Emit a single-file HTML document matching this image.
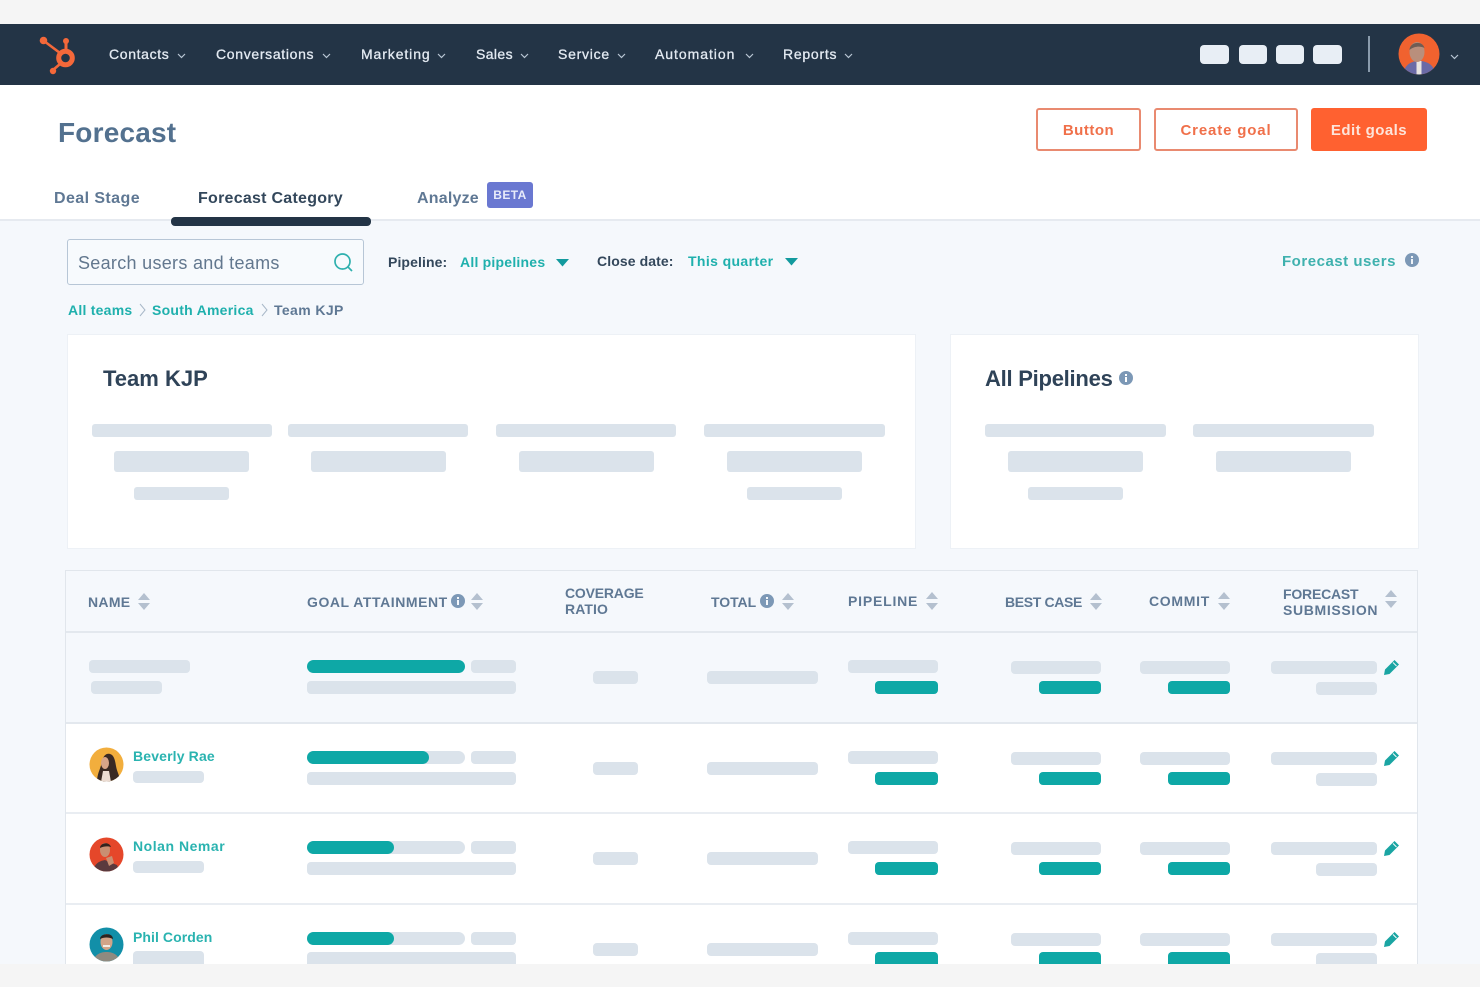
<!DOCTYPE html>
<html lang="en"><head><meta charset="utf-8"><title>Forecast</title>
<style>
html,body{margin:0;padding:0;background:#f5f5f5}
#p{position:relative;width:1480px;height:987px;overflow:hidden;background:#f5f5f5;font-family:"Liberation Sans",sans-serif;filter:blur(.35px)}
#p div,#p svg{position:absolute}
.t{white-space:nowrap;line-height:20px;height:20px}
.nv{top:44px;color:#e3eaf2;font-size:14px;font-weight:400;letter-spacing:.75px;-webkit-text-stroke:.3px #e3eaf2}
.s{background:#dbe3eb;border-radius:3px}
.g{background:#0ea8a6;border-radius:6px}
.h{color:#5f7894;font-size:14px;font-weight:700;letter-spacing:.55px}
.tl{color:#1fb0ad;font-weight:700}
.r{left:0;width:1480px;height:90px;top:0}
.sort{width:12px;height:20px}
</style></head><body>
<div id="p">
<!-- backgrounds -->
<div style="left:0;top:24px;width:1480px;height:61px;background:#233446"></div>
<div style="left:0;top:85px;width:1480px;height:135px;background:#fff"></div>
<div style="left:0;top:219px;width:1480px;height:745px;background:#f5f8fc"></div>
<div style="left:0;top:219px;width:1480px;height:2px;background:#e6eaf0"></div>

<!-- logo -->
<svg style="left:30px;top:28px" width="56" height="52" viewBox="30 28 56 52">
<g stroke="#f4683a" fill="none"><line x1="44" y1="41" x2="60" y2="53" stroke-width="2.6"/><line x1="66" y1="42" x2="66" y2="51" stroke-width="3"/><line x1="53" y1="70" x2="60" y2="64" stroke-width="2.6"/><circle cx="65.500" cy="58" r="6.800" stroke-width="5"/></g>
<g fill="#f4683a"><circle cx="43.500" cy="40.500" r="3.800"/><circle cx="66" cy="41" r="3"/><circle cx="53" cy="71" r="3.200"/></g></svg>

<!-- nav -->
<div class="t nv" style="left:109px;letter-spacing:.65px">Contacts</div>
<div class="t nv" style="left:216px;letter-spacing:.67px">Conversations</div>
<div class="t nv" style="left:361px;letter-spacing:.9px">Marketing</div>
<div class="t nv" style="left:476px;letter-spacing:.4px">Sales</div>
<div class="t nv" style="left:558px">Service</div>
<div class="t nv" style="left:655px;letter-spacing:.95px">Automation</div>
<div class="t nv" style="left:783px">Reports</div>
<svg style="left:0;top:24px" width="1480" height="61" viewBox="0 24 1480 61" fill="none" stroke="#b9c6d4" stroke-width="1.200"><path d="M178 54l3.500 3.500 3.500-3.500M323 54l3.500 3.500 3.500-3.500M438 54l3.500 3.500 3.500-3.500M521 54l3.500 3.500 3.500-3.500M618 54l3.500 3.500 3.500-3.500M746 54l3.500 3.500 3.500-3.500M845 54l3.500 3.500 3.500-3.500M1451 55l3.500 3.500 3.500-3.500"/></svg>
<div style="left:1200px;top:45px;width:29px;height:19px;background:#e8eef5;border-radius:4px"></div>
<div style="left:1239px;top:45px;width:28px;height:19px;background:#e8eef5;border-radius:4px"></div>
<div style="left:1276px;top:45px;width:28px;height:19px;background:#e8eef5;border-radius:4px"></div>
<div style="left:1313px;top:45px;width:29px;height:19px;background:#e8eef5;border-radius:4px"></div>
<div style="left:1368px;top:36px;width:2px;height:36px;background:#8a9bac"></div>
<svg style="left:1398px;top:33px" width="42" height="42" viewBox="0 0 42 42"><defs><clipPath id="c0"><circle cx="21" cy="21" r="20.500"/></clipPath></defs><g clip-path="url(#c0)"><rect width="42" height="42" fill="#f0622f"/><path d="M5 42c1-10 8-14 16-14s16 4 16 14z" fill="#6a6aa6"/><rect x="18.500" y="28" width="5" height="14" fill="#e8e4e0"/><ellipse cx="19" cy="19" rx="7.500" ry="10" fill="#b98f7c"/><path d="M11.500 17c0-8 13-10 15-2-4-2-10-2-15 2z" fill="#6f5d54"/></g></svg>

<!-- header -->
<div class="t" style="left:58px;top:118px;height:30px;line-height:30px;font-size:28px;font-weight:700;color:#53718f;letter-spacing:.2px">Forecast</div>
<div class="t" style="left:1036px;top:108px;width:101px;height:39px;line-height:41px;border:2px solid #e98a70;border-radius:3px;background:#fff;color:#f0704a;font-size:15px;font-weight:700;text-align:center;letter-spacing:.5px">Button</div>
<div class="t" style="left:1154px;top:108px;width:140px;height:39px;line-height:41px;border:2px solid #e98a70;border-radius:3px;background:#fff;color:#f0704a;font-size:15px;font-weight:700;text-align:center;letter-spacing:.85px">Create goal</div>
<div class="t" style="left:1311px;top:108px;width:116px;height:43px;line-height:45px;border-radius:3px;background:#ff6130;color:#fde4da;font-size:15px;font-weight:700;text-align:center;letter-spacing:.45px">Edit goals</div>

<!-- tabs -->
<div class="t" style="left:54px;top:189px;font-size:16px;font-weight:700;color:#5f7894;letter-spacing:.42px">Deal Stage</div>
<div class="t" style="left:198px;top:189px;font-size:16px;font-weight:700;color:#33475b;letter-spacing:.26px">Forecast Category</div>
<div class="t" style="left:417px;top:189px;font-size:16px;font-weight:700;color:#5f7894;letter-spacing:.2px">Analyze</div>
<div class="t" style="left:487px;top:182px;width:46px;height:26px;line-height:26px;background:#6a78d1;border-radius:3px;color:#e8ebfa;font-size:12px;font-weight:700;text-align:center;letter-spacing:.4px">BETA</div>
<div style="left:171px;top:217px;width:200px;height:9px;background:#233446;border-radius:4px"></div>

<!-- filters -->
<div style="left:67px;top:239px;width:295px;height:44px;border:1px solid #b7c6d6;border-radius:3px;background:#f7fafd"></div>
<div class="t" style="left:78px;top:253px;font-size:18px;color:#62778e;letter-spacing:.3px">Search users and teams</div>
<svg style="left:332px;top:251px" width="22" height="22" viewBox="0 0 22 22" fill="none" stroke="#2fb0ae" stroke-width="1.700"><circle cx="10.500" cy="10.500" r="7.500"/><path d="M16 16l4 4"/></svg>
<div class="t" style="left:388px;top:252px;font-size:14px;font-weight:700;color:#33475b;letter-spacing:.1px">Pipeline:</div>
<div class="t tl" style="left:460px;top:252px;font-size:14px;letter-spacing:.22px">All pipelines</div>
<svg style="left:556px;top:259px" width="13" height="8" viewBox="0 0 13 8"><path d="M0 0h13L6.500 7.500z" fill="#129a9e"/></svg>
<div class="t" style="left:597px;top:251px;font-size:14px;font-weight:700;color:#33475b;letter-spacing:.1px">Close date:</div>
<div class="t tl" style="left:688px;top:251px;font-size:14px;letter-spacing:.38px">This quarter</div>
<svg style="left:785px;top:258px" width="13" height="8" viewBox="0 0 13 8"><path d="M0 0h13L6.500 7.500z" fill="#129a9e"/></svg>
<div class="t tl" style="left:1282px;top:252px;font-size:15px;color:#3fb1ae;letter-spacing:.52px">Forecast users</div>
<svg style="left:1405px;top:253px" width="14" height="14" viewBox="0 0 14 14"><circle cx="7" cy="7" r="7" fill="#7c98b6"/><rect x="6" y="6" width="2" height="5" fill="#eef3f8"/><rect x="6" y="3" width="2" height="2" fill="#eef3f8"/></svg>

<!-- breadcrumbs -->
<div class="t tl" style="left:68px;top:300px;font-size:14px;letter-spacing:.24px">All teams</div>
<div class="t tl" style="left:152px;top:300px;font-size:14px;letter-spacing:.26px">South America</div>
<div class="t" style="left:274px;top:300px;font-size:14px;font-weight:700;color:#5f7894;letter-spacing:.38px">Team KJP</div>
<svg style="left:136px;top:302px" width="140" height="16" viewBox="0 0 140 16" fill="none" stroke="#a8b8c8"><path d="M4 2l5 6-5 6M126 2l5 6-5 6"/></svg>

<!-- cards -->
<div style="left:67px;top:334px;width:847px;height:213px;background:#fff;border:1px solid #edf1f6"></div>
<div style="left:950px;top:334px;width:467px;height:213px;background:#fff;border:1px solid #edf1f6"></div>
<div class="t" style="left:103px;top:367px;height:24px;line-height:24px;font-size:22px;font-weight:700;color:#2f4358">Team KJP</div>
<div class="t" style="left:985px;top:367px;height:24px;line-height:24px;font-size:22px;font-weight:700;color:#2f4358;letter-spacing:-.25px">All Pipelines</div>
<svg style="left:1119px;top:371px" width="14" height="14" viewBox="0 0 14 14"><circle cx="7" cy="7" r="7" fill="#7c98b6"/><rect x="6" y="6" width="2" height="5" fill="#fff"/><rect x="6" y="3" width="2" height="2" fill="#fff"/></svg>
<div class="s" style="left:92px;top:424px;width:180px;height:13px"></div>
<div class="s" style="left:288px;top:424px;width:180px;height:13px"></div>
<div class="s" style="left:496px;top:424px;width:180px;height:13px"></div>
<div class="s" style="left:704px;top:424px;width:181px;height:13px"></div>
<div class="s" style="left:114px;top:451px;width:135px;height:21px"></div>
<div class="s" style="left:311px;top:451px;width:135px;height:21px"></div>
<div class="s" style="left:519px;top:451px;width:135px;height:21px"></div>
<div class="s" style="left:727px;top:451px;width:135px;height:21px"></div>
<div class="s" style="left:134px;top:487px;width:95px;height:13px"></div>
<div class="s" style="left:747px;top:487px;width:95px;height:13px"></div>
<div class="s" style="left:985px;top:424px;width:181px;height:13px"></div>
<div class="s" style="left:1193px;top:424px;width:181px;height:13px"></div>
<div class="s" style="left:1008px;top:451px;width:135px;height:21px"></div>
<div class="s" style="left:1216px;top:451px;width:135px;height:21px"></div>
<div class="s" style="left:1028px;top:487px;width:95px;height:13px"></div>

<!-- table frame -->
<div style="left:65px;top:570px;width:1351px;height:394px;border:1px solid #e1e6ec;border-bottom:0;background:#fff"></div>
<div style="left:66px;top:571px;width:1351px;height:60px;background:#f5f8fc;border-bottom:2px solid #e3e8ee"></div>
<div style="left:66px;top:633px;width:1351px;height:89px;background:#f5f8fc"></div>
<div style="left:66px;top:722px;width:1351px;height:2px;background:#e3e8ee"></div>
<div style="left:66px;top:812px;width:1351px;height:2px;background:#e9edf2"></div>
<div style="left:66px;top:903px;width:1351px;height:2px;background:#e9edf2"></div>

<!-- table header -->
<div class="t h" style="left:88px;top:592px;letter-spacing:.3px">NAME</div>
<div class="t h" style="left:307px;top:592px">GOAL ATTAINMENT</div>
<div class="h" style="left:565px;top:585px;line-height:16px;white-space:nowrap;letter-spacing:-.2px">COVERAGE<br><span style="letter-spacing:.1px">RATIO</span></div>
<div class="t h" style="left:711px;top:592px;letter-spacing:-.05px">TOTAL</div>
<div class="t h" style="left:848px;top:591px;letter-spacing:.8px">PIPELINE</div>
<div class="t h" style="left:1005px;top:592px;letter-spacing:-.35px">BEST CASE</div>
<div class="t h" style="left:1149px;top:591px;letter-spacing:.7px">COMMIT</div>
<div class="h" style="left:1283px;top:586px;line-height:16px;white-space:nowrap;letter-spacing:-.2px">FORECAST<br><span style="letter-spacing:.65px">SUBMISSION</span></div>
<svg style="left:0;top:570px" width="1480" height="64" viewBox="0 570 1480 64" fill="#b4c0cf"><path d="M138 600l6-7 6 7zM138 603l6 7 6-7zM471 600l6-7 6 7zM471 603l6 7 6-7zM782 600l6-7 6 7zM782 603l6 7 6-7zM926 599l6-7 6 7zM926 603l6 7 6-7zM1090 600l6-7 6 7zM1090 603l6 7 6-7zM1218 599l6-7 6 7zM1218 603l6 7 6-7zM1385 597l6-7 6 7zM1385 601l6 7 6-7z"/><g fill="#7c98b6"><circle cx="458" cy="601" r="7"/><circle cx="767" cy="601" r="7"/></g><g fill="#f5f8fc"><rect x="457" y="600" width="2" height="5"/><rect x="457" y="597" width="2" height="2"/><rect x="766" y="600" width="2" height="5"/><rect x="766" y="597" width="2" height="2"/></g></svg>

<!-- row 1 -->
<div class="r" style="top:0">
<div class="s" style="left:89px;top:660px;width:101px;height:13px;border-radius:4px"></div>
<div class="s" style="left:91px;top:681px;width:71px;height:13px;border-radius:4px"></div>
<div class="g" style="left:307px;top:660px;width:158px;height:13px;border-radius:7px"></div>
<div class="s" style="left:471px;top:660px;width:45px;height:13px;border-radius:4px"></div>
<div class="s" style="left:307px;top:681px;width:209px;height:13px;border-radius:4px"></div>
<div class="s" style="left:593px;top:671px;width:45px;height:13px;border-radius:4px"></div>
<div class="s" style="left:707px;top:671px;width:111px;height:13px;border-radius:4px"></div>
<div class="s" style="left:848px;top:660px;width:90px;height:13px;border-radius:4px"></div>
<div class="g" style="left:875px;top:681px;width:63px;height:13px;border-radius:4px"></div>
<div class="s" style="left:1011px;top:661px;width:90px;height:13px;border-radius:4px"></div>
<div class="g" style="left:1039px;top:681px;width:62px;height:13px;border-radius:4px"></div>
<div class="s" style="left:1140px;top:661px;width:90px;height:13px;border-radius:4px"></div>
<div class="g" style="left:1168px;top:681px;width:62px;height:13px;border-radius:4px"></div>
<div class="s" style="left:1271px;top:661px;width:106px;height:13px;border-radius:4px"></div>
<div class="s" style="left:1316px;top:682px;width:61px;height:13px;border-radius:4px"></div>
<svg style="left:1383px;top:659px" width="17" height="17" viewBox="0 0 17 17"><path d="M11.500 1l4.500 4.500-9.500 9.500-5.500 1 1-5.500z" fill="#1aa5a3"/><path d="M10 3.500l3.500 3.500" stroke="#f5f8fc" stroke-width="1"/></svg>
</div>

<!-- row 2 -->
<div class="r" style="top:90.500px">
<div class="g" style="left:307px;top:660px;width:158px;height:13px;background:#dbe3eb;border-radius:7px"></div>
<div class="g" style="left:307px;top:660px;width:122px;height:13px;border-radius:7px"></div>
<div class="s" style="left:471px;top:660px;width:45px;height:13px;border-radius:4px"></div>
<div class="s" style="left:307px;top:681px;width:209px;height:13px;border-radius:4px"></div>
<div class="s" style="left:593px;top:671px;width:45px;height:13px;border-radius:4px"></div>
<div class="s" style="left:707px;top:671px;width:111px;height:13px;border-radius:4px"></div>
<div class="s" style="left:848px;top:660px;width:90px;height:13px;border-radius:4px"></div>
<div class="g" style="left:875px;top:681px;width:63px;height:13px;border-radius:4px"></div>
<div class="s" style="left:1011px;top:661px;width:90px;height:13px;border-radius:4px"></div>
<div class="g" style="left:1039px;top:681px;width:62px;height:13px;border-radius:4px"></div>
<div class="s" style="left:1140px;top:661px;width:90px;height:13px;border-radius:4px"></div>
<div class="g" style="left:1168px;top:681px;width:62px;height:13px;border-radius:4px"></div>
<div class="s" style="left:1271px;top:661px;width:106px;height:13px;border-radius:4px"></div>
<div class="s" style="left:1316px;top:682px;width:61px;height:13px;border-radius:4px"></div>
<svg style="left:1383px;top:659px" width="17" height="17" viewBox="0 0 17 17"><path d="M11.500 1l4.500 4.500-9.500 9.500-5.500 1 1-5.500z" fill="#1aa5a3"/><path d="M10 3.500l3.500 3.500" stroke="#fff" stroke-width="1"/></svg>
<div class="t tl" style="left:133px;top:655px;font-size:14px;color:#2ab3b0;letter-spacing:.15px">Beverly Rae</div>
<div class="s" style="left:133px;top:680px;width:71px;height:12px;border-radius:4px"></div>
<svg style="left:89px;top:656px" width="35" height="35" viewBox="0 0 35 35"><defs><clipPath id="c1"><circle cx="17.500" cy="17.500" r="17"/></clipPath></defs><g clip-path="url(#c1)"><rect width="35" height="35" fill="#f2ae3d"/><path d="M8 35c0-8 3-12 5-20 1-6 4-9 8-8 4 1 5 6 6 12 1 6 4 10 4 16z" fill="#3a2a24"/><ellipse cx="16" cy="16" rx="4" ry="6" fill="#d8a588"/><path d="M14 24h6l2 11h-10z" fill="#ecdcd2"/></g></svg>
</div>

<!-- row 3 -->
<div class="r" style="top:180.500px">
<div class="g" style="left:307px;top:660px;width:158px;height:13px;background:#dbe3eb;border-radius:7px"></div>
<div class="g" style="left:307px;top:660px;width:87px;height:13px;border-radius:7px"></div>
<div class="s" style="left:471px;top:660px;width:45px;height:13px;border-radius:4px"></div>
<div class="s" style="left:307px;top:681px;width:209px;height:13px;border-radius:4px"></div>
<div class="s" style="left:593px;top:671px;width:45px;height:13px;border-radius:4px"></div>
<div class="s" style="left:707px;top:671px;width:111px;height:13px;border-radius:4px"></div>
<div class="s" style="left:848px;top:660px;width:90px;height:13px;border-radius:4px"></div>
<div class="g" style="left:875px;top:681px;width:63px;height:13px;border-radius:4px"></div>
<div class="s" style="left:1011px;top:661px;width:90px;height:13px;border-radius:4px"></div>
<div class="g" style="left:1039px;top:681px;width:62px;height:13px;border-radius:4px"></div>
<div class="s" style="left:1140px;top:661px;width:90px;height:13px;border-radius:4px"></div>
<div class="g" style="left:1168px;top:681px;width:62px;height:13px;border-radius:4px"></div>
<div class="s" style="left:1271px;top:661px;width:106px;height:13px;border-radius:4px"></div>
<div class="s" style="left:1316px;top:682px;width:61px;height:13px;border-radius:4px"></div>
<svg style="left:1383px;top:659px" width="17" height="17" viewBox="0 0 17 17"><path d="M11.500 1l4.500 4.500-9.500 9.500-5.500 1 1-5.500z" fill="#1aa5a3"/><path d="M10 3.500l3.500 3.500" stroke="#fff" stroke-width="1"/></svg>
<div class="t tl" style="left:133px;top:655px;font-size:14px;color:#2ab3b0;letter-spacing:.53px">Nolan Nemar</div>
<div class="s" style="left:133px;top:680px;width:71px;height:12px;border-radius:4px"></div>
<svg style="left:89px;top:656px" width="35" height="35" viewBox="0 0 35 35"><defs><clipPath id="c2"><circle cx="17.500" cy="17.500" r="17"/></clipPath></defs><g clip-path="url(#c2)"><rect width="35" height="35" fill="#e5472a"/><path d="M4 35c1-8 6-11 12-12l4 2 8 3 3 7z" fill="#5a3a3e"/><ellipse cx="16" cy="13" rx="5" ry="7" fill="#c98f72"/><path d="M11 11c0-5 9-7 11-1-3-1-7-1-11 1z" fill="#33231e"/><path d="M17 21l6-2 2 7-5 3z" fill="#c98f72"/></g></svg>
</div>

<!-- row 4 -->
<div class="r" style="top:271.500px;height:693px;overflow:hidden;clip-path:inset(0)">
<div class="g" style="left:307px;top:660px;width:158px;height:13px;background:#dbe3eb;border-radius:7px"></div>
<div class="g" style="left:307px;top:660px;width:87px;height:13px;border-radius:7px"></div>
<div class="s" style="left:471px;top:660px;width:45px;height:13px;border-radius:4px"></div>
<div class="s" style="left:593px;top:671px;width:45px;height:13px;border-radius:4px"></div>
<div class="s" style="left:707px;top:671px;width:111px;height:13px;border-radius:4px"></div>
<div class="s" style="left:848px;top:660px;width:90px;height:13px;border-radius:4px"></div>
<div class="s" style="left:1011px;top:661px;width:90px;height:13px;border-radius:4px"></div>
<div class="s" style="left:1140px;top:661px;width:90px;height:13px;border-radius:4px"></div>
<div class="s" style="left:1271px;top:661px;width:106px;height:13px;border-radius:4px"></div>
<svg style="left:1383px;top:659px" width="17" height="17" viewBox="0 0 17 17"><path d="M11.500 1l4.500 4.500-9.500 9.500-5.500 1 1-5.500z" fill="#1aa5a3"/><path d="M10 3.500l3.500 3.500" stroke="#fff" stroke-width="1"/></svg>
<div class="t tl" style="left:133px;top:655px;font-size:14px;color:#2ab3b0;letter-spacing:.07px">Phil Corden</div>
</div>
<div class="s" style="left:133px;top:951px;width:71px;height:13px;border-radius:4px 4px 0 0"></div>
<div class="s" style="left:307px;top:952px;width:209px;height:12px;border-radius:4px 4px 0 0"></div>
<div class="g" style="left:875px;top:952px;width:63px;height:12px;border-radius:4px 4px 0 0"></div>
<div class="g" style="left:1039px;top:952px;width:62px;height:12px;border-radius:4px 4px 0 0"></div>
<div class="g" style="left:1168px;top:952px;width:62px;height:12px;border-radius:4px 4px 0 0"></div>
<div class="s" style="left:1316px;top:953px;width:61px;height:11px;border-radius:4px 4px 0 0"></div>
<svg style="left:89px;top:927px" width="35" height="35" viewBox="0 0 35 35"><defs><clipPath id="c3"><circle cx="17.500" cy="17.500" r="17"/></clipPath></defs><g clip-path="url(#c3)"><rect width="35" height="35" fill="#128fa8"/><path d="M4 35c1-7 7-10 13.500-10S30 28 31 35z" fill="#8f8a80"/><ellipse cx="17.500" cy="15" rx="6" ry="8" fill="#d2a488"/><path d="M11 12c0-6 13-7 13 0-4-2-9-2-13 0z" fill="#2b2420"/><rect x="14" y="18" width="7" height="2" fill="#f2ece6"/></g></svg>

<!-- bottom band -->
<div style="left:0;top:964px;width:1480px;height:23px;background:#f5f5f5"></div>
</div>
</body></html>
